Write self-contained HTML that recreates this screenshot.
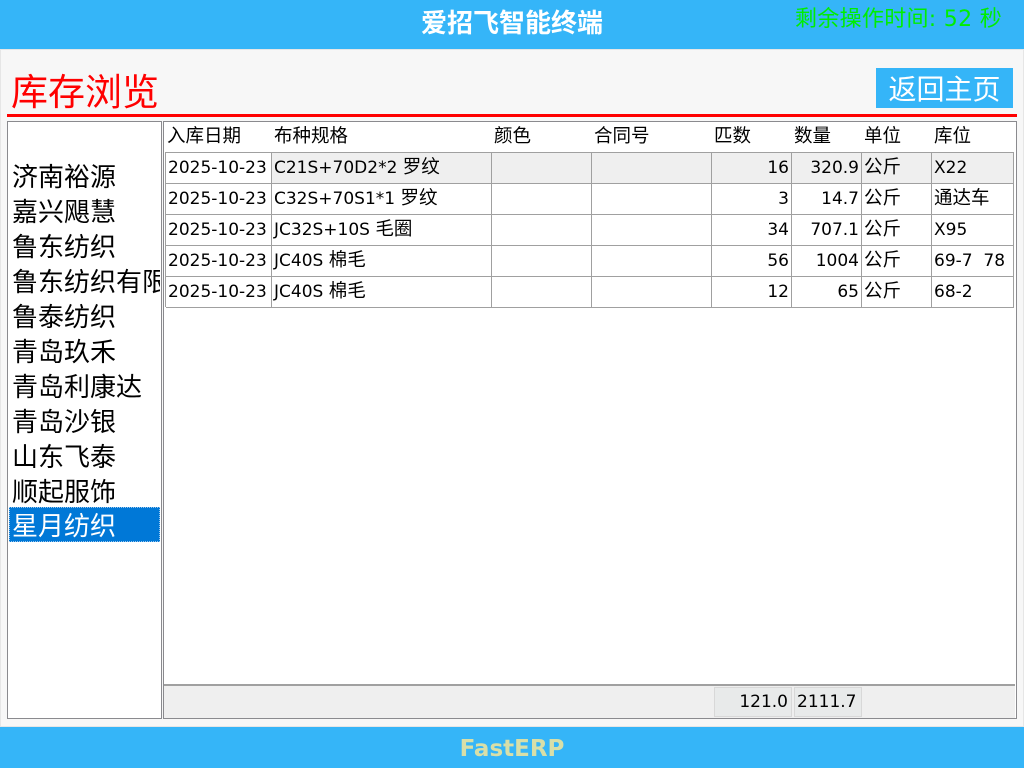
<!DOCTYPE html>
<html><head><meta charset="utf-8"><style>
*{margin:0;padding:0;box-sizing:border-box}
body{width:1024px;height:768px;position:relative;background:#f7f7f7;font-family:"DejaVu Sans","Noto Sans CJK SC",sans-serif;overflow:hidden;color:#000}
.a{position:absolute}
#top{left:0;top:0;width:1024px;height:49px;background:#35b5f8}
#bot{left:0;top:727px;width:1024px;height:41px;background:#35b5f8}
.c{position:absolute;height:31px;line-height:30px;font-size:17px;white-space:nowrap;overflow:hidden;padding:0 2px}
.c span{font-size:18.5px;font-family:"Noto Sans CJK SC",sans-serif;line-height:0}
.r{text-align:right}
.li{position:absolute;left:12px;font-size:26px;line-height:35px;white-space:nowrap;width:148px;overflow:hidden;font-family:"Noto Sans CJK SC",sans-serif}
</style></head><body>
<div class="a" id="top"></div>
<div class="a" style="left:0;top:4px;width:1024px;text-align:center;color:#fff;font-weight:bold;font-size:26px;line-height:36px;font-family:'Noto Sans CJK SC',sans-serif">爱招飞智能终端</div>
<div class="a" style="left:795px;top:3px;color:#00ee00;font-size:22px;line-height:34px;letter-spacing:0.3px">剩余操作时间: 52 秒</div>
<div class="a" style="left:0;top:49px;width:1024px;height:678px;border:1px solid #e6e6e6;background:#f7f7f7"></div>
<div class="a" style="left:11px;top:66px;color:#ff0000;font-size:37px;line-height:46px;font-family:'Noto Sans CJK SC',sans-serif">库存浏览</div>
<div class="a" style="left:876px;top:68px;width:137px;height:40px;background:#35b5f8;color:#fff;font-size:28px;line-height:40px;text-align:center;font-family:'Noto Sans CJK SC',sans-serif">返回主页</div>
<div class="a" style="left:7px;top:114px;width:1010px;height:3px;background:#ff0000"></div>
<div class="a" style="left:7px;top:121px;width:155px;height:598px;background:#fff;border:1px solid #8a8a8e"></div>
<div class="li" style="top:158px">济南裕源</div>
<div class="li" style="top:193px">嘉兴飓慧</div>
<div class="li" style="top:228px">鲁东纺织</div>
<div class="li" style="top:263px">鲁东纺织有限</div>
<div class="li" style="top:298px">鲁泰纺织</div>
<div class="li" style="top:333px">青岛玖禾</div>
<div class="li" style="top:368px">青岛利康达</div>
<div class="li" style="top:403px">青岛沙银</div>
<div class="li" style="top:438px">山东飞泰</div>
<div class="li" style="top:473px">顺起服饰</div>
<div class="a" style="left:9px;top:507px;width:151px;height:35px;background:#0078d7;border:1px dotted #9cc8ee"></div>
<div class="li" style="top:507px;color:#fff;left:12px">星月纺织</div>
<div class="a" style="left:163px;top:121px;width:854px;height:598px;background:#fff;border:1px solid #8a8a8e"></div>
<div class="a" style="left:164px;top:684px;width:851px;height:34px;background:#efefef;border-top:2px solid #a0a0a0"></div>
<div class="a" style="left:714px;top:687px;width:78px;height:30px;background:#e8eaea;border:1px solid #d8d8d8;font-size:17px;line-height:28px;text-align:right;padding-right:3px">121.0</div>
<div class="a" style="left:794px;top:687px;width:68px;height:30px;background:#e8eaea;border:1px solid #d8d8d8;font-size:17px;line-height:28px;padding-left:2px">2111.7</div>
<div id="g"></div>
<div class="a" id="bot"></div>
<div class="a" style="left:0;top:731px;width:1024px;text-align:center;color:#d8dfa8;font-weight:bold;font-size:23px;line-height:36px">FastERP</div>
<script>
var cols=[165,272,492,592,712,792,862,932,1014];
var hd=["入库日期","布种规格","颜色","合同号","匹数","数量","单位","库位"];
var rows=[["2025-10-23","C21S+70D2*2 <span>罗纹</span>","","","16","320.9","<span>公斤</span>","X22"],
["2025-10-23","C32S+70S1*1 <span>罗纹</span>","","","3","14.7","<span>公斤</span>","<span>通达车</span>"],
["2025-10-23","JC32S+10S <span>毛圈</span>","","","34","707.1","<span>公斤</span>","X95"],
["2025-10-23","JC40S <span>棉毛</span>","","","56","1004","<span>公斤</span>","69-7&nbsp; 78"],
["2025-10-23","JC40S <span>棉毛</span>","","","12","65","<span>公斤</span>","68-2"]];
var h="";
for(var i=0;i<8;i++){h+='<div class="c" style="left:'+cols[i]+'px;top:122px;width:'+(cols[i+1]-cols[i])+'px"><span>'+hd[i]+'</span></div>';}
h+='<div class="a" style="left:165px;top:152px;width:849px;height:1px;background:#a0a0a0"></div>';
h+='<div class="a" style="left:165px;top:152px;width:1px;height:155px;background:#a0a0a0"></div>';
for(var r=0;r<5;r++){var t=152+r*31;
for(var i=0;i<8;i++){var bg=(r==0&&i>0)?'#efefef':'#fff';
h+='<div class="c'+((i==4||i==5)?' r':'')+'" style="left:'+(cols[i]+(i==0?1:0))+'px;top:'+(t+1)+'px;width:'+(cols[i+1]-cols[i]-(i==0?1:0))+'px;height:31px;background:'+bg+';border-right:1px solid #a0a0a0;border-bottom:1px solid #a0a0a0">'+rows[r][i]+'</div>';}}
document.getElementById('g').innerHTML=h;
</script>
</body></html>
